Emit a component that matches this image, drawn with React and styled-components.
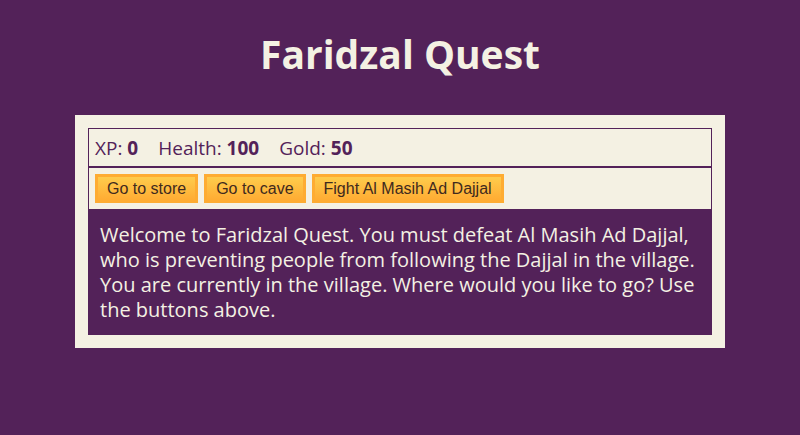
import React from 'react';
import styled, { createGlobalStyle } from 'styled-components';

const GlobalStyle = createGlobalStyle`
  html, body {
    margin: 0;
    padding: 0;
    background-color: #532259;
  }
  body {
    font-family: "Open Sans", "Noto Sans", sans-serif;
  }
`;

const Title = styled.h1`
  margin: 0 0 30px;
  padding-top: 29px;
  height: 85px;
  box-sizing: border-box;
  text-align: center;
  font-size: 39px;
  font-weight: 700;
  line-height: 50px;
  color: #f4f1e3;
`;

const Game = styled.div`
  width: 624px;
  margin: 0 auto;
  padding: 13px;
  background-color: #f4f1e3;
`;

const Stats = styled.div`
  border: 1px solid #532259;
  padding: 5px 6px;
  height: 27px;
  display: flex;
  align-items: center;
  gap: 20px;
  color: #532259;
  font-size: 19px;
`;

const Stat = styled.span`
  strong {
    font-weight: 700;
  }
`;

const Controls = styled.div`
  border: 1px solid #532259;
  padding: 6px;
  display: flex;
  gap: 6px;
`;

const Button = styled.button`
  cursor: pointer;
  height: 29px;
  padding: 0 9px;
  font-family: "Liberation Sans", Arial, sans-serif;
  font-size: 16px;
  color: #3f2a1e;
  background-color: #feac32;
  background-image: linear-gradient(#fecc4c, #ffac33);
  border: 3px solid #feac32;
`;

const Text = styled.div`
  background-color: #532259;
  color: #f4f1e3;
  padding: 12px 12px 13px;
  font-size: 20px;
  line-height: 25px;
`;

export default function App() {
  return (
    <>
      <GlobalStyle />
      <Title>Faridzal Quest</Title>
      <Game>
        <Stats>
          <Stat>XP: <strong>0</strong></Stat>
          <Stat>Health: <strong>100</strong></Stat>
          <Stat>Gold: <strong>50</strong></Stat>
        </Stats>
        <Controls>
          <Button>Go to store</Button>
          <Button>Go to cave</Button>
          <Button>Fight Al Masih Ad Dajjal</Button>
        </Controls>
        <Text>
          Welcome to Faridzal Quest. You must defeat Al Masih Ad Dajjal, who is preventing people
          from following the Dajjal in the village. You are currently in the village. Where would
          you like to go? Use the buttons above.
        </Text>
      </Game>
    </>
  );
}
